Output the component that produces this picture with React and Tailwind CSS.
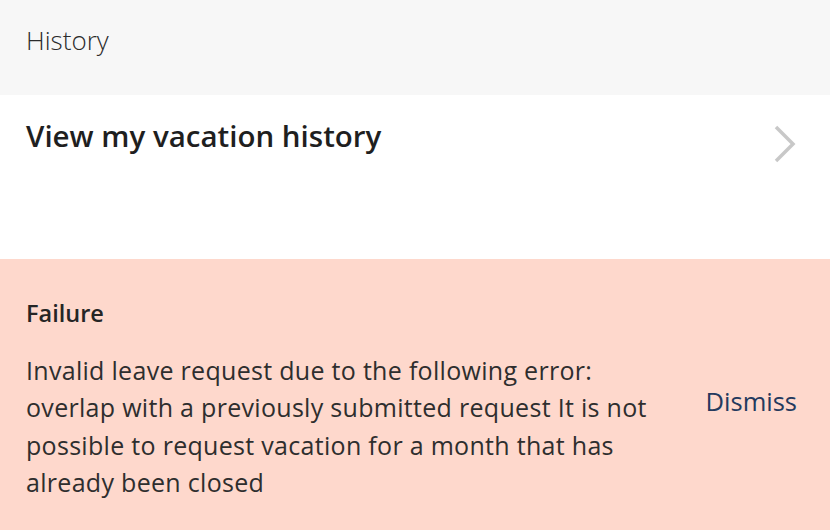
import React from "react";

const ChevronRight = () => (
  <svg width="24" height="40" viewBox="0 0 24 40" fill="none">
    <path d="M3 3 L20 20 L3 37" stroke="#c8c8c8" strokeWidth="3.5" />
  </svg>
);

const App = () => {
  return (
    <div className="w-[830px] h-[530px] flex flex-col bg-white text-[#252525] font-['Open_Sans',sans-serif]">
      <div className="h-[95px] bg-[#f7f7f7] px-[26px] pt-[22px]">
        <h2 className="text-[26px] font-light leading-[36px] text-[#2b2b2b]">History</h2>
      </div>

      <button className="h-[164px] flex items-start justify-between px-[26px] pt-[20px] text-left">
        <span className="text-[29.5px] font-semibold leading-[42px] text-[#1f1f1f]">
          View my vacation history
        </span>
        <span className="mr-[7px] mt-[9px]">
          <ChevronRight />
        </span>
      </button>

      <div className="flex-1 bg-[#fed8cc] px-[26px] pt-[37px]">
        <h3 className="text-[23.5px] font-semibold leading-[34px] text-[#252525]">Failure</h3>
        <div className="flex items-start justify-between mt-[22px]">
          <p className="w-[640px] text-[25px] leading-[37.4px] text-[#2e2e2e] tracking-[0.3px]">
            Invalid leave request due to the following error: overlap with a previously submitted
            request It is not possible to request vacation for a month that has already been closed
          </p>
          <button className="text-[25.5px] leading-[36px] font-normal text-[#243a5e] mr-[7px] mt-[31px]">
            Dismiss
          </button>
        </div>
      </div>
    </div>
  );
};

export default App;
